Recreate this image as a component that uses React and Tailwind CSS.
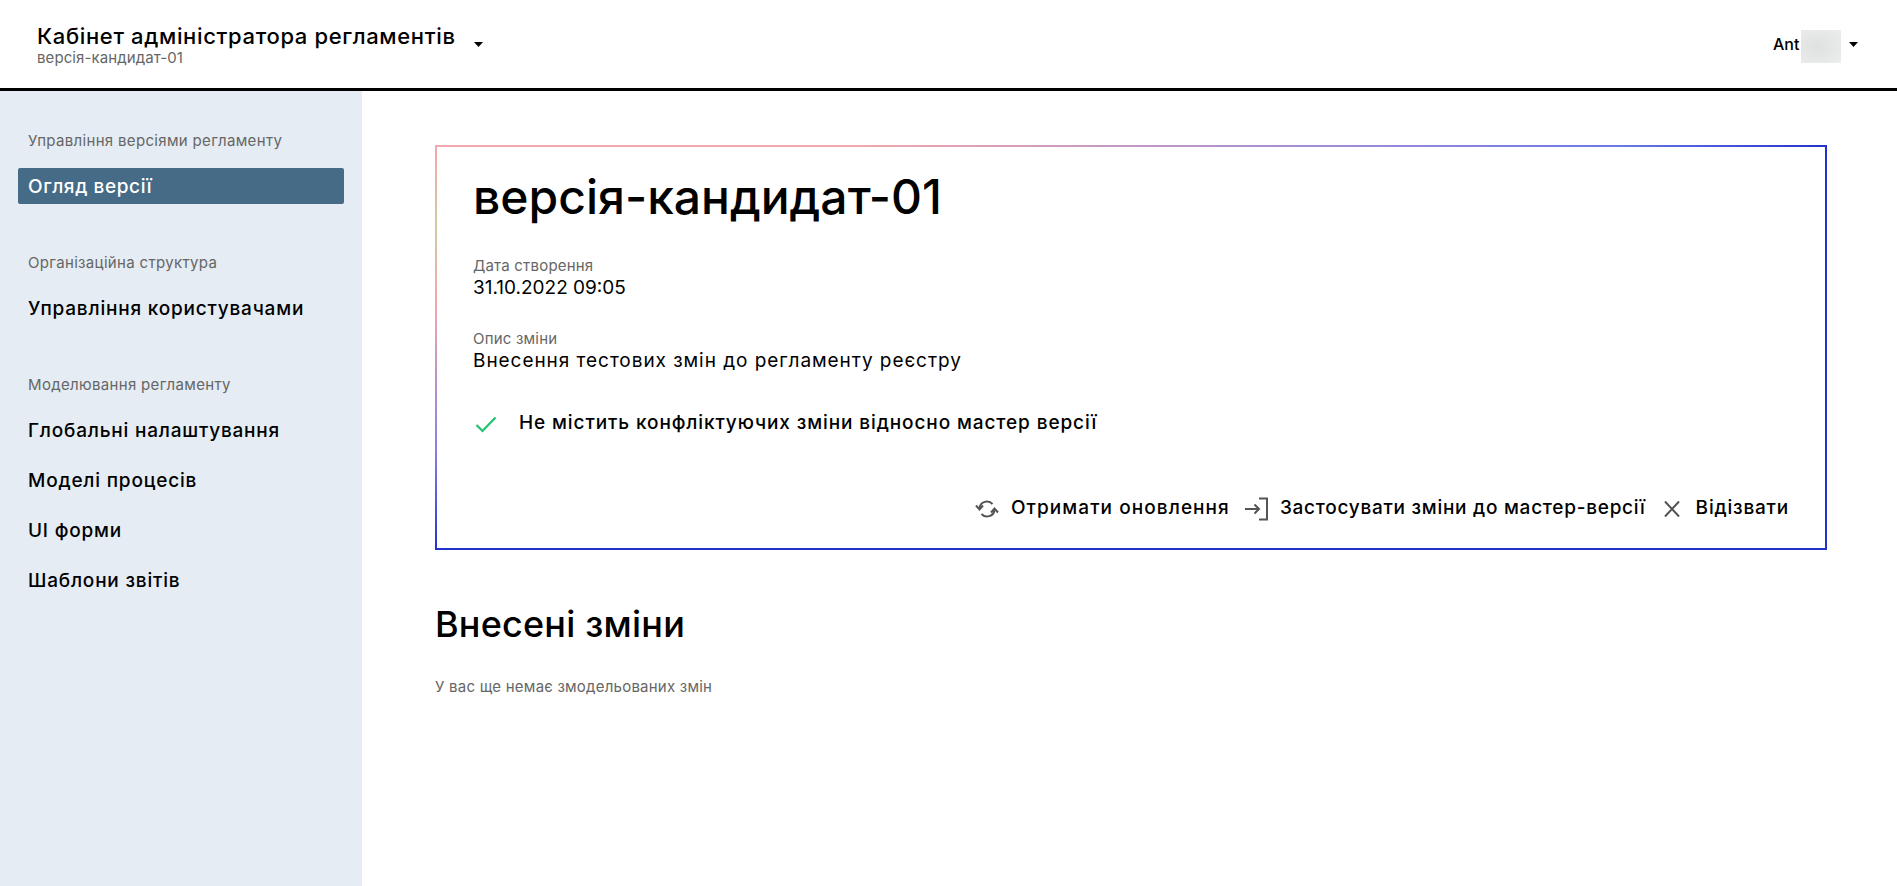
const baseFont = "font-['Inter','Noto_Sans',sans-serif]";

// Small filled caret used in the header dropdowns
function Caret() {
  return (
    <svg width="9" height="5" viewBox="0 0 9 5" className="shrink-0">
      <path d="M0 0h9L4.500 5z" fill="#000" />
    </svg>
  );
}

function SideGroup({ title, items }) {
  return (
    <div className="mb-[49px]">
      <div className="px-[28px] text-[15px] tracking-[0.33px] leading-[20px] text-[#666] mb-[17px]">{title}</div>
      <div className="flex flex-col gap-[14px] px-[18px]">
        {items.map((item) => (
          <a
            key={item.label}
            className={
              item.active
                ? "h-[36px] flex items-center px-[10px] pt-[2px] rounded-[2px] bg-[#456b87] text-white text-[19px] tracking-[0.6px] font-medium"
                : "h-[36px] flex items-center px-[10px] pt-[2px] text-black text-[19px] tracking-[0.8px] font-medium"
            }
          >
            {item.label}
          </a>
        ))}
      </div>
    </div>
  );
}

function RefreshIcon() {
  return (
    <svg width="24" height="24" viewBox="0 0 24 24" fill="none" stroke="#555" strokeWidth="2">
      <path d="M17.500 7A7.500 7.500 0 0 0 4.500 11" />
      <path d="M6.500 17A7.500 7.500 0 0 0 19.500 13" />
      <path d="M1 8.500l3.500 4 3.500-4" />
      <path d="M16 15.500l3.500-4 3.500 4" />
    </svg>
  );
}

function ApplyIcon() {
  return (
    <svg width="24" height="24" viewBox="0 0 24 24" fill="none" stroke="#555" strokeWidth="2">
      <path d="M1 12h14M10.500 7.500l4.500 4.500-4.500 4.500" />
      <path d="M15 1.500h8v21h-8" />
    </svg>
  );
}

function CloseIcon() {
  return (
    <svg width="24" height="24" viewBox="0 0 24 24" fill="none" stroke="#555" strokeWidth="2">
      <path d="M5 4.500l14 15M19 4.500l-14 15" />
    </svg>
  );
}

function Action({ icon, label, tracking }) {
  return (
    <button className={`flex items-center gap-[12px] text-[19px] font-medium text-black ${tracking}`}>
      {icon}
      <span className="mb-[2px]">{label}</span>
    </button>
  );
}

export default function App() {
  return (
    <div className={`min-h-[886px] flex flex-col bg-white ${baseFont}`}>
      {/* Header */}
      <header className="h-[91px] shrink-0 flex items-center justify-between border-b-[3px] border-black pl-[37px] pr-[39px]">
        <div className="flex items-center gap-[18px]">
          <div>
            <div className="text-[22px] tracking-[0.65px] leading-[26px] font-medium text-black">Кабінет адміністратора регламентів</div>
            <div className="text-[15px] tracking-[0.1px] leading-[17px] text-[#666]">версія-кандидат-01</div>
          </div>
          <Caret />
        </div>
        <div className="flex items-center">
          <span className="text-[16px] font-medium text-black w-[28px] whitespace-nowrap">Ant</span>
          <div className="w-[40px] h-[33px] mt-[5px] bg-[radial-gradient(ellipse_at_40%_50%,#dfe0e0,#eceded)]" />
          <span className="ml-[8px]"><Caret /></span>
        </div>
      </header>

      <div className="flex flex-1">
        {/* Sidebar */}
        <aside className="w-[362px] shrink-0 bg-[#e5ecf3] pt-[40px] min-h-[795px]">
          <SideGroup title="Управління версіями регламенту" items={[{ label: "Огляд версії", active: true }]} />
          <SideGroup title="Організаційна структура" items={[{ label: "Управління користувачами" }]} />
          <SideGroup
            title="Моделювання регламенту"
            items={[
              { label: "Глобальні налаштування" },
              { label: "Моделі процесів" },
              { label: "UI форми" },
              { label: "Шаблони звітів" },
            ]}
          />
        </aside>

        {/* Main content */}
        <main className="flex-1 pl-[73px] pr-[70px] pt-[54px]">
          <section className="h-[405px] p-[2px] bg-[#2233cc] bg-no-repeat [background-image:linear-gradient(90deg,#f2a8ac_0%,#f2a8ac_30%,#9a8ad8_67%,#6a78e8_85%,#2233cc_100%),linear-gradient(180deg,#f2a8ac_0%,#cfcba0_20%,#f2a8ac_39%,#8a80e0_75%,#2233cc_100%)] [background-size:100%_2px,2px_100%]">
            <div className="h-full bg-white px-[36px] pt-[18px]">
              <h1 className="text-[48px] leading-[64px] font-medium text-black">версія-кандидат-01</h1>
              <div className="mt-[27px] text-[15px] tracking-[0.2px] leading-[19px] text-[#666]">Дата створення</div>
              <div className="text-[19px] leading-[26px] text-black">31.10.2022 09:05</div>
              <div className="mt-[29px] text-[15px] tracking-[0.2px] leading-[18px] text-[#666]">Опис зміни</div>
              <div className="text-[19px] tracking-[0.95px] leading-[26px] text-black">Внесення тестових змін до регламенту реєстру</div>
              <div className="mt-[35px] flex items-center gap-[18px]">
                <svg width="28" height="28" viewBox="0 0 28 28" fill="none" stroke="#1fc46e" strokeWidth="2.200">
                  <path d="M3.500 16l6 6L22.500 8.500" />
                </svg>
                <span className="text-[19px] tracking-[0.9px] font-medium text-black">Не містить конфліктуючих зміни відносно мастер версії</span>
              </div>
              <div className="mt-[56px] flex justify-end gap-[14px]">
                <Action icon={<RefreshIcon />} label="Отримати оновлення" tracking="tracking-[1.07px]" />
                <Action icon={<ApplyIcon />} label="Застосувати зміни до мастер-версії" tracking="tracking-[0.73px]" />
                <Action icon={<CloseIcon />} label="Відізвати" tracking="tracking-[0.8px]" />
              </div>
            </div>
          </section>
          <h2 className="mt-[50px] text-[36px] tracking-[0.2px] leading-[48px] font-medium text-black">Внесені зміни</h2>
          <p className="mt-[29px] text-[15px] tracking-[0.23px] leading-[20px] text-[#666]">У вас ще немає змодельованих змін</p>
        </main>
      </div>
    </div>
  );
}
